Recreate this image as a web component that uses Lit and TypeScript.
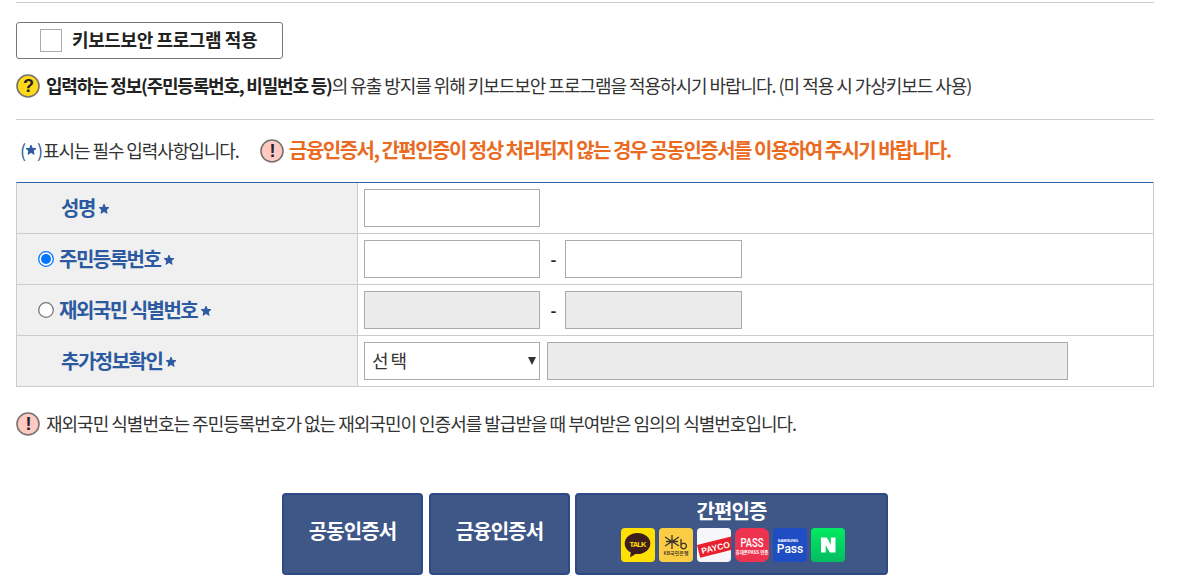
import { LitElement, html, css, svg } from 'lit';
import { customElement } from 'lit/decorators.js';

const badge = (bg: string, mark: string, fg: string) => html`
  <svg class="badge" width="24" height="24" viewBox="0 0 24 24">
    <circle cx="12" cy="12" r="11" fill=${bg} stroke="#77736a" stroke-width="1.6"></circle>
    <text x="12" y="18" text-anchor="middle" font-size="18" font-weight="900" fill=${fg} font-family="Liberation Sans, sans-serif">${mark}</text>
  </svg>
`;

const star = html`
  <svg class="star" width="12" height="12" viewBox="0 0 12 12">
    <path d="M6 1.200l1.400 3.200 3.500.2-2.700 2.300.9 3.400L6 8.400l-3 1.900.9-3.400-2.700-2.300 3.500-.2z" fill="#2c5aa0" stroke="#2c5aa0" stroke-width="1" stroke-linejoin="round"></path>
  </svg>
`;

const logos = [
  svg`<rect width="34" height="34" rx="4" fill="#ffe000"></rect>
    <ellipse cx="16.500" cy="15.500" rx="12.800" ry="10.500" fill="#3c1e1e"></ellipse>
    <path d="M10 23l-1 6.500 7-4.500z" fill="#3c1e1e"></path>
    <text x="16.500" y="18.500" text-anchor="middle" font-size="7.500" font-weight="700" fill="#ffe000" font-family="Liberation Sans, sans-serif">TALK</text>`,
  svg`<rect width="34" height="34" rx="4" fill="#fbcd45"></rect>
    <path d="M13 7v14M6 9l14 9M20 9L6 18M7 13.500h12" stroke="#3a332a" stroke-width="1.300" fill="none"></path>
    <path d="M22 11v9M22 17a2.800 2.800 0 1 1 0 2" stroke="#3a332a" stroke-width="1.300" fill="none"></path>
    <text x="17" y="27" text-anchor="middle" font-size="5" font-weight="500" letter-spacing="0" fill="#3a332a" font-family="Noto Sans CJK KR, sans-serif">KB국민은행</text>`,
  svg`<rect width="34" height="34" rx="4" fill="#f7f7f9"></rect>
    <g transform="rotate(-14 17 19)"><rect x="1" y="13" width="36" height="13" fill="#e8202c"></rect>
    <text x="4" y="23" font-size="8.500" font-weight="700" letter-spacing="0" fill="#fff" font-family="Liberation Sans, sans-serif">PAYCO</text></g>`,
  svg`<rect width="34" height="34" rx="7" fill="#ee3350"></rect>
    <text transform="translate(17 19) scale(1 1.300)" text-anchor="middle" font-size="9.500" font-weight="500" letter-spacing="0" fill="#fff" font-family="Roboto, sans-serif">PASS</text>
    <text x="17" y="26" text-anchor="middle" font-size="4.500" letter-spacing="0" fill="#fff" font-family="Noto Sans CJK KR, sans-serif">휴대폰PASS 인증</text>`,
  svg`<rect width="34" height="34" rx="4" fill="#1f4ec4"></rect>
    <text x="15" y="14" text-anchor="middle" font-size="4" font-weight="700" letter-spacing="0" fill="#fff" font-family="Liberation Sans, sans-serif">SAMSUNG</text>
    <text x="17" y="25" text-anchor="middle" font-size="12" font-weight="500" letter-spacing="0" fill="#fff" font-family="Roboto, sans-serif">Pass</text>`,
  svg`<defs><linearGradient id="nv" x1="0" y1="0" x2="0" y2="1"><stop offset="0" stop-color="#03ea62"></stop><stop offset="1" stop-color="#03bc60"></stop></linearGradient></defs>
    <rect width="34" height="34" rx="4" fill="url(#nv)"></rect>
    <path d="M10 9.500h5.800l4 7.200V9.500h4.700v15h-5.700l-4.100-7.300v7.300H10z" fill="#fff"></path>`,
];

@customElement('app-root')
export class AppRoot extends LitElement {
  static styles = css`
    :host {
      display: block;
      width: 1177px;
      height: 582px;
      overflow: hidden;
      background: #fff;
      font-family: 'Noto Sans CJK KR', 'Noto Sans', sans-serif;
      color: #333;
      font-size: 18px;
    }
    .wrap {
      box-sizing: border-box;
      width: 1138px;
      margin-left: 16px;
      padding-top: 2px;
    }
    .rule {
      height: 1px;
      background: #ccc;
    }
    .keyboard {
      box-sizing: border-box;
      width: 267px;
      height: 37px;
      margin-top: 19px;
      padding: 0 0 0 23px;
      display: flex;
      align-items: center;
      gap: 10px;
      border: 1px solid #777;
      border-radius: 3px;
      color: #222;
      font-size: 18px;
      font-weight: 700;
      letter-spacing: -0.4px;
    }
    .keyboard .label {
      padding-bottom: 3px;
    }
    .check {
      box-sizing: border-box;
      width: 22px;
      height: 23px;
      border: 1.500px solid #aaa;
      background: #fff;
    }
    .notice {
      display: flex;
      align-items: center;
      gap: 6px;
      height: 24px;
      margin-top: 15px;
      white-space: nowrap;
    }
    .notice span {
      padding-bottom: 2px;
    }
    .notice b {
      color: #222;
      font-weight: 700;
      letter-spacing: -1.2px;
    }
    .notice.main {
      margin-bottom: 21px;
      letter-spacing: -1.04px;
    }
    .badge {
      flex: none;
    }
    .legend {
      display: flex;
      align-items: center;
      height: 24px;
      margin-top: 19px;
      padding-left: 4px;
      white-space: nowrap;
      font-size: 18px;
      letter-spacing: -1.07px;
    }
    .legend .paren {
      display: flex;
      align-items: center;
      width: 23px;
      color: #2c5aa0;
      padding-bottom: 2px;
    }
    .legend .txt {
      width: 217px;
      padding-bottom: 2px;
    }
    .warn {
      margin-left: 5px;
      padding-bottom: 3px;
      color: #ea6b1f;
      font-size: 20px;
      font-weight: 700;
      letter-spacing: -1.52px;
    }
    .table {
      display: grid;
      grid-template-columns: 341px 1fr;
      grid-auto-rows: 51px;
      margin-top: 19px;
      border-top: 1px solid #2f62a8;
      border-left: 1px solid #ccc;
      border-right: 1px solid #ccc;
    }
    .th {
      box-sizing: border-box;
      display: flex;
      align-items: center;
      gap: 3px;
      background: #f0f0f0;
      border-right: 1px solid #ccc;
      border-bottom: 1px solid #ccc;
      color: #2c5aa0;
      font-size: 20px;
      font-weight: 700;
      letter-spacing: -1.5px;
      white-space: nowrap;
      padding-bottom: 2px;
    }
    .th .star {
      margin-top: 3px;
    }
    .th.plain {
      padding-left: 44px;
    }
    .th.pick {
      padding-left: 21px;
    }
    .radio {
      flex: none;
      margin-right: 2px;
      margin-top: 2px;
    }
    .td {
      box-sizing: border-box;
      display: flex;
      align-items: center;
      padding-left: 6px;
      border-bottom: 1px solid #ccc;
    }
    .field {
      box-sizing: border-box;
      width: 176px;
      height: 38px;
      border: 1px solid #aaa;
      background: #fff;
    }
    .field.off {
      background: #ebebeb;
    }
    .field.second {
      width: 177px;
    }
    .dash {
      width: 25px;
      padding-left: 2px;
      box-sizing: border-box;
      text-align: center;
      color: #222;
      font-size: 16px;
      font-weight: 700;
    }
    .select {
      display: flex;
      align-items: center;
      justify-content: space-between;
      padding: 0 3px 3px 7px;
      color: #333;
      font-size: 18px;
      letter-spacing: 2px;
    }
    .caret {
      width: 0;
      height: 0;
      margin-top: 3px;
      border-left: 4px solid transparent;
      border-right: 4px solid transparent;
      border-top: 8px solid #333;
    }
    .field.extra {
      width: 521px;
      margin-left: 7px;
    }
    .notice.foot {
      margin-top: 25px;
      letter-spacing: -1px;
    }
    .actions {
      display: flex;
      margin-top: 57px;
      margin-left: 266px;
    }
    .btn {
      box-sizing: border-box;
      height: 82px;
      display: flex;
      flex-direction: column;
      align-items: center;
      justify-content: center;
      background: #3e5787;
      border: 2px solid #2d4a85;
      border-radius: 4px;
      color: #fff;
      font-size: 20px;
      font-weight: 700;
      letter-spacing: -0.85px;
    }
    .btn.cert {
      width: 141px;
      margin-right: 6px;
      padding-bottom: 7px;
    }
    .btn.cert.second {
      margin-right: 5px;
    }
    .btn.simple {
      width: 313px;
      line-height: 24px;
      justify-content: flex-end;
      padding-bottom: 11px;
    }
    .logos {
      display: flex;
      gap: 4px;
      margin-top: 5px;
      margin-left: 2px;
    }
  `;

  render() {
    return html`
      <div class="wrap">
        <div class="rule"></div>
        <div class="keyboard"><span class="check"></span><span class="label">키보드보안 프로그램 적용</span></div>
        <div class="notice main">
          ${badge('#ffd91a', '?', '#222')}
          <span><b>입력하는 정보(주민등록번호, 비밀번호 등)</b>의 유출 방지를 위해 키보드보안 프로그램을 적용하시기 바랍니다. (미 적용 시 가상키보드 사용)</span>
        </div>
        <div class="rule"></div>
        <div class="legend">
          <span class="paren">(${star})</span>
          <span class="txt">표시는 필수 입력사항입니다.</span>
          ${badge('#ffc9c4', '!', '#222')}
          <span class="warn">금융인증서, 간편인증이 정상 처리되지 않는 경우 공동인증서를 이용하여 주시기 바랍니다.</span>
        </div>
        <div class="table">
          <div class="th plain">성명${star}</div>
          <div class="td"><div class="field"></div></div>

          <div class="th pick">
            <svg class="radio" width="16" height="16" viewBox="0 0 16 16">
              <circle cx="8" cy="8" r="7.300" fill="#fff" stroke="#0075ff" stroke-width="1.300"></circle>
              <circle cx="8" cy="8" r="5" fill="#0075ff"></circle>
            </svg>
            주민등록번호${star}
          </div>
          <div class="td"><div class="field"></div><span class="dash">-</span><div class="field second"></div></div>

          <div class="th pick">
            <svg class="radio" width="16" height="16" viewBox="0 0 16 16">
              <circle cx="8" cy="8" r="7.300" fill="#fff" stroke="#767676" stroke-width="1.300"></circle>
            </svg>
            재외국민 식별번호${star}
          </div>
          <div class="td"><div class="field off"></div><span class="dash">-</span><div class="field off second"></div></div>

          <div class="th plain">추가정보확인${star}</div>
          <div class="td">
            <div class="field select"><span>선택</span><span class="caret"></span></div>
            <div class="field off extra"></div>
          </div>
        </div>
        <div class="notice foot">
          ${badge('#ffc9c4', '!', '#222')}
          <span>재외국민 식별번호는 주민등록번호가 없는 재외국민이 인증서를 발급받을 때 부여받은 임의의 식별번호입니다.</span>
        </div>
        <div class="actions">
          <div class="btn cert">공동인증서</div>
          <div class="btn cert second">금융인증서</div>
          <div class="btn simple">
            간편인증
            <div class="logos">
              ${logos.map((l) => html`<svg width="34" height="34" viewBox="0 0 34 34">${l}</svg>`)}
            </div>
          </div>
        </div>
      </div>
    `;
  }
}
